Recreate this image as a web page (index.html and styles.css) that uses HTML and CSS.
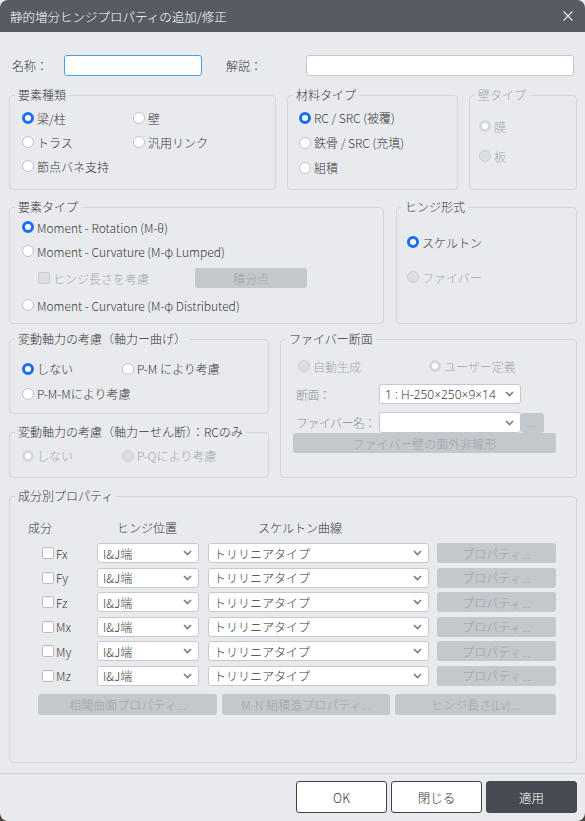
FILE: index.html
```html
<!DOCTYPE html>
<html lang="ja">
<head>
    <meta charset="UTF-8">
    <title>静的増分ヒンジプロパティの追加/修正</title>
    <link rel="stylesheet" href="styles.css">
</head>
<body>
<div class="dialog">
    <div class="titlebar">
        <span class="title">静的増分ヒンジプロパティの追加/修正</span>
        <svg class="close" viewBox="0 0 10 10"><path d="M0.5 0.5L9.5 9.5M9.5 0.5L0.5 9.5"/></svg>
    </div>

    <div class="content">
        <div class="name-row">
            <label class="lbl name-lbl">名称：</label>
            <input class="text name" type="text">
            <label class="lbl desc-lbl">解説：</label>
            <input class="text desc" type="text">
        </div>

        <div class="row row1">
            <fieldset class="grp kind">
                <legend>要素種類</legend>
                <div class="opts kind-opts">
                    <label class="opt"><span class="radio on"></span>梁/柱</label>
                    <label class="opt"><span class="radio"></span>壁</label>
                    <label class="opt"><span class="radio"></span>トラス</label>
                    <label class="opt"><span class="radio"></span>汎用リンク</label>
                    <label class="opt"><span class="radio"></span>節点バネ支持</label>
                </div>
            </fieldset>
            <fieldset class="grp material">
                <legend>材料タイプ</legend>
                <div class="opts material-opts">
                    <label class="opt"><span class="radio on"></span>RC / SRC (被覆)</label>
                    <label class="opt"><span class="radio"></span>鉄骨 / SRC (充填)</label>
                    <label class="opt"><span class="radio"></span>組積</label>
                </div>
            </fieldset>
            <fieldset class="grp wall disabled">
                <legend>壁タイプ</legend>
                <div class="opts wall-opts">
                    <label class="opt"><span class="radio on"></span>膜</label>
                    <label class="opt"><span class="radio"></span>板</label>
                </div>
            </fieldset>
        </div>

        <div class="row row2">
            <fieldset class="grp elem">
                <legend>要素タイプ</legend>
                <div class="opts elem-opts">
                    <label class="opt"><span class="radio on"></span>Moment - Rotation (M-θ)</label>
                    <label class="opt"><span class="radio"></span>Moment - Curvature (M-φ Lumped)</label>
                    <div class="check-row">
                        <label class="opt off"><span class="check"></span>ヒンジ長さを考慮</label>
                        <button class="btn btn-int">積分点</button>
                    </div>
                    <label class="opt"><span class="radio"></span>Moment - Curvature (M-φ Distributed)</label>
                </div>
            </fieldset>
            <fieldset class="grp hinge">
                <legend>ヒンジ形式</legend>
                <div class="opts hinge-opts">
                    <label class="opt"><span class="radio on"></span>スケルトン</label>
                    <label class="opt off"><span class="radio"></span>ファイバー</label>
                </div>
            </fieldset>
        </div>

        <div class="row row3">
            <div class="axial-col">
                <fieldset class="grp axial-m">
                    <legend>変動軸力の考慮（軸力ー曲げ）</legend>
                    <div class="opts axial-opts pad-m">
                        <label class="opt"><span class="radio on"></span>しない</label>
                        <label class="opt"><span class="radio"></span>P-M により考慮</label>
                        <label class="opt"><span class="radio"></span>P-M-Mにより考慮</label>
                    </div>
                </fieldset>
                <fieldset class="grp axial-q">
                    <legend>変動軸力の考慮（軸力ーせん断）：RCのみ</legend>
                    <div class="opts axial-opts pad-q disabled">
                        <label class="opt"><span class="radio on"></span>しない</label>
                        <label class="opt"><span class="radio"></span>P-Qにより考慮</label>
                    </div>
                </fieldset>
            </div>
            <fieldset class="grp fiber">
                <legend>ファイバー断面</legend>
                <div class="fiber-body">
                    <div class="opts fiber-opts disabled">
                        <label class="opt"><span class="radio"></span>自動生成</label>
                        <label class="opt"><span class="radio on"></span>ユーザー定義</label>
                    </div>
                    <div class="form-row sect-row">
                        <span class="form-lbl">断面：</span>
                        <div class="select sect-select"><span class="latin">1 : H-250×250×9×14</span><svg viewBox="0 0 9 6"><path d="M1 1l3.5 3.5L8 1"/></svg></div>
                    </div>
                    <div class="form-row name-sel-row">
                        <span class="form-lbl">ファイバー名：</span>
                        <div class="select sect-select"><span></span><svg viewBox="0 0 9 6"><path d="M1 1l3.5 3.5L8 1"/></svg></div>
                        <button class="btn btn-more">...</button>
                    </div>
                    <button class="btn btn-wide">ファイバー壁の面外非線形</button>
                </div>
            </fieldset>
        </div>

        <fieldset class="grp comp">
            <legend>成分別プロパティ</legend>
            <div class="comp-body">
                <div class="comp-head">
                    <span>成分</span>
                    <span>ヒンジ位置</span>
                    <span>スケルトン曲線</span>
                </div>
                <div class="comp-grid">
                    <label class="comp-name"><span class="check"></span>Fx</label>
                    <div class="select sel-pos"><span>I&amp;J端</span><svg viewBox="0 0 9 6"><path d="M1 1l3.5 3.5L8 1"/></svg></div>
                    <div class="select sel-curve"><span>トリリニアタイプ</span><svg viewBox="0 0 9 6"><path d="M1 1l3.5 3.5L8 1"/></svg></div>
                    <button class="btn">プロパティ...</button>

                    <label class="comp-name"><span class="check"></span>Fy</label>
                    <div class="select sel-pos"><span>I&amp;J端</span><svg viewBox="0 0 9 6"><path d="M1 1l3.5 3.5L8 1"/></svg></div>
                    <div class="select sel-curve"><span>トリリニアタイプ</span><svg viewBox="0 0 9 6"><path d="M1 1l3.5 3.5L8 1"/></svg></div>
                    <button class="btn">プロパティ...</button>

                    <label class="comp-name"><span class="check"></span>Fz</label>
                    <div class="select sel-pos"><span>I&amp;J端</span><svg viewBox="0 0 9 6"><path d="M1 1l3.5 3.5L8 1"/></svg></div>
                    <div class="select sel-curve"><span>トリリニアタイプ</span><svg viewBox="0 0 9 6"><path d="M1 1l3.5 3.5L8 1"/></svg></div>
                    <button class="btn">プロパティ...</button>

                    <label class="comp-name"><span class="check"></span>Mx</label>
                    <div class="select sel-pos"><span>I&amp;J端</span><svg viewBox="0 0 9 6"><path d="M1 1l3.5 3.5L8 1"/></svg></div>
                    <div class="select sel-curve"><span>トリリニアタイプ</span><svg viewBox="0 0 9 6"><path d="M1 1l3.5 3.5L8 1"/></svg></div>
                    <button class="btn">プロパティ...</button>

                    <label class="comp-name"><span class="check"></span>My</label>
                    <div class="select sel-pos"><span>I&amp;J端</span><svg viewBox="0 0 9 6"><path d="M1 1l3.5 3.5L8 1"/></svg></div>
                    <div class="select sel-curve"><span>トリリニアタイプ</span><svg viewBox="0 0 9 6"><path d="M1 1l3.5 3.5L8 1"/></svg></div>
                    <button class="btn">プロパティ...</button>

                    <label class="comp-name"><span class="check"></span>Mz</label>
                    <div class="select sel-pos"><span>I&amp;J端</span><svg viewBox="0 0 9 6"><path d="M1 1l3.5 3.5L8 1"/></svg></div>
                    <div class="select sel-curve"><span>トリリニアタイプ</span><svg viewBox="0 0 9 6"><path d="M1 1l3.5 3.5L8 1"/></svg></div>
                    <button class="btn">プロパティ...</button>
                </div>
                <div class="comp-btns">
                    <button class="btn b-surface">相関曲面プロパティ...</button>
                    <button class="btn b-mn">M-N 組積造プロパティ...</button>
                    <button class="btn b-lv">ヒンジ長さ(Lv)...</button>
                </div>
            </div>
        </fieldset>
    </div>

    <div class="footer">
        <button class="fbtn">OK</button>
        <button class="fbtn">閉じる</button>
        <button class="fbtn primary">適用</button>
    </div>
</div>
</body>
</html>
```

FILE: styles.css
```css
* { box-sizing: border-box; }
html, body { margin: 0; padding: 0; }
body {
    width: 585px;
    height: 821px;
    background: linear-gradient(#e9eaee 50%, #4a433d 50%);
    font-family: "Noto Sans CJK JP", "Noto Sans", sans-serif;
    font-size: 12px;
    font-weight: 300;
    color: #383838;
}
button, input { font: inherit; }

.dialog {
    height: 821px;
    display: flex;
    flex-direction: column;
    background: #e9eaee;
    border-radius: 8px;
    overflow: hidden;
}

/* title bar */
.titlebar {
    flex: none;
    height: 32px;
    background: #575c64;
    color: #fff;
    display: flex;
    align-items: center;
    justify-content: space-between;
    padding: 0 12px 0 10px;
}
.title { font-size: 12.5px; }
.close { width: 10px; height: 10px; stroke: #e8e8e8; stroke-width: 1.1; fill: none; }

.content {
    flex: 1;
    padding: 23px 8px 0 9px;
}

/* name / description */
.name-row { display: flex; align-items: center; height: 21px; margin-bottom: 12px; }
.lbl { line-height: 21px; }
.name-lbl { width: 55px; padding-left: 3px; }
.desc-lbl { width: 80px; margin-left: 24px; }
input.text {
    height: 21px;
    margin: 0;
    border: 1px solid #c3c6cb;
    border-radius: 3px;
    background: #fff;
    outline: none;
}
.name { width: 138px; border-color: #46a0e0 !important; }
.desc { flex: 1; margin-right: 3px !important; }

/* group boxes */
.row { display: flex; justify-content: space-between; }
.grp {
    margin: 0;
    padding: 0;
    min-width: 0;
    border: 1px solid #d2d5da;
    border-radius: 4px;
}
.grp legend {
    margin-left: 5px;
    padding: 0 3px;
    line-height: 14px;
}
.grp.disabled legend { color: #a2a6ab; }

.row1 { height: 102px; margin-bottom: 10px; }
.kind { width: 267px; }
.material { width: 171px; }
.wall { width: 108px; }

.row2 { height: 124px; margin-bottom: 8px; }
.elem { width: 375px; }
.hinge { width: 181px; }

.row3 { height: 146px; margin-bottom: 11px; }
.axial-col { width: 260px; display: flex; flex-direction: column; }
.axial-m { height: 82px; margin-bottom: 11px; }
.axial-q { height: 53px; }
.fiber { width: 297px; }

.comp { height: 274px; }

/* options */
.opts { display: grid; }
.opt { display: flex; align-items: center; height: 24px; white-space: nowrap; }
.opt.off, .disabled .opt { color: #a2a6ab; }

.radio {
    flex: none;
    width: 12px;
    height: 12px;
    margin-right: 3px;
    border: 1px solid #bfc3c8;
    border-radius: 50%;
    background: #fff;
}
.radio.on { border: 3.5px solid #1a6ef0; }
.disabled .radio, .opt.off .radio { background: #dcdee2; border-color: #c8cbd0; }
.disabled .radio.on { background: #fff; border: 3px solid #d4d7db; }

.check {
    flex: none;
    width: 12px;
    height: 12px;
    margin-right: 3px;
    border: 1px solid #b8bcc2;
    border-radius: 2px;
    background: #fff;
}
.opt.off .check { background: #dcdee2; border-color: #c8cbd0; }

.kind-opts { padding: 4px 0 0 12px; grid-template-columns: 111px auto; }
.material-opts { padding: 3px 0 0 11px; grid-auto-rows: 25px; }
.material-opts .opt { height: 25px; }
.wall-opts { padding: 9px 0 0 9px; grid-auto-rows: 30px; }
.wall-opts .opt { height: 30px; }

.elem-opts { padding: 1px 0 0 12px; }
.check-row { display: flex; align-items: center; height: 30px; padding-left: 16px; }
.check-row .opt { width: 157px; }
.btn-int { width: 112px; height: 21px; margin-top: -6px; }

.hinge-opts { padding: 16px 0 0 10px; row-gap: 11px; }

.axial-opts { grid-template-columns: 100px auto; padding-left: 12px; }
.axial-opts .opt { height: 25px; }
.pad-m { padding-top: 10px; }
.pad-q { padding-top: 4px; }

/* fiber section */
.fiber-body { padding: 8px 20px 0 12px; }
.fiber-opts { grid-template-columns: 131px auto; padding-left: 5px; }
.form-row { display: flex; align-items: center; }
.sect-row { margin-top: 6px; }
.name-sel-row { margin-top: 8px; }
.form-lbl { flex: none; width: 86px; padding-left: 3px; color: #8c9096; white-space: nowrap; letter-spacing: -0.6px; }
.sect-select { width: 142px; }
.latin { font-family: "Noto Sans", sans-serif; font-size: 12px; }
.name-sel-row .select { height: 21px; }
.btn-more { width: 23px; height: 21px; margin-left: 12px; font-size: 10px; }
.btn-wide { width: 100%; height: 21px; margin-top: 9px; }

/* buttons and selects */
.btn {
    display: flex;
    align-items: center;
    justify-content: center;
    margin: 0;
    padding: 0;
    border: none;
    border-radius: 3px;
    background: #c3c8cd;
    color: #9da2a8;
    height: 20px;
}
.select {
    display: flex;
    align-items: center;
    justify-content: space-between;
    height: 20px;
    padding: 0 6px 0 5px;
    border: 1px solid #c5c8cd;
    border-radius: 3px;
    background: #fff;
    white-space: nowrap;
}
.select svg { flex: none; width: 9px; height: 6px; fill: none; stroke: #7a7d82; stroke-width: 1.7; }

/* component table */
.comp-body { padding: 15px 20px 0 0; }
.comp-head {
    display: grid;
    grid-template-columns: 89px 141px auto;
    padding-left: 18px;
    line-height: 20px;
}
.comp-grid {
    display: grid;
    grid-template-columns: 56px 111px 229px 119px;
    grid-auto-rows: 20px;
    row-gap: 4.5px;
    margin-top: 5px;
    padding-left: 31px;
}
.comp-name { display: flex; align-items: center; padding-left: 1px; }
.comp-name .check { width: 12px; height: 12px; margin-right: 2px; }
.sel-pos { width: 102px; }
.sel-curve { width: 221px; }
.comp-btns { display: flex; gap: 5px; margin-top: 8.5px; padding-left: 28px; }
.comp-btns .btn { height: 21px; }
.b-surface { width: 179px; }
.b-mn { width: 168px; }
.b-lv { width: 161px; }

/* footer */
.footer {
    flex: none;
    height: 48px;
    border-top: 1px solid #cdd0d5;
    padding: 7px 8px 0 0;
    display: flex;
    justify-content: flex-end;
    gap: 4px;
}
.fbtn {
    width: 91px;
    height: 32px;
    border: 1px solid #3e4349;
    border-radius: 3px;
    background: #fff;
    color: #333;
    font-size: 12.5px;
}
.fbtn.primary { background: #464b52; border-color: #464b52; color: #fff; }
```
